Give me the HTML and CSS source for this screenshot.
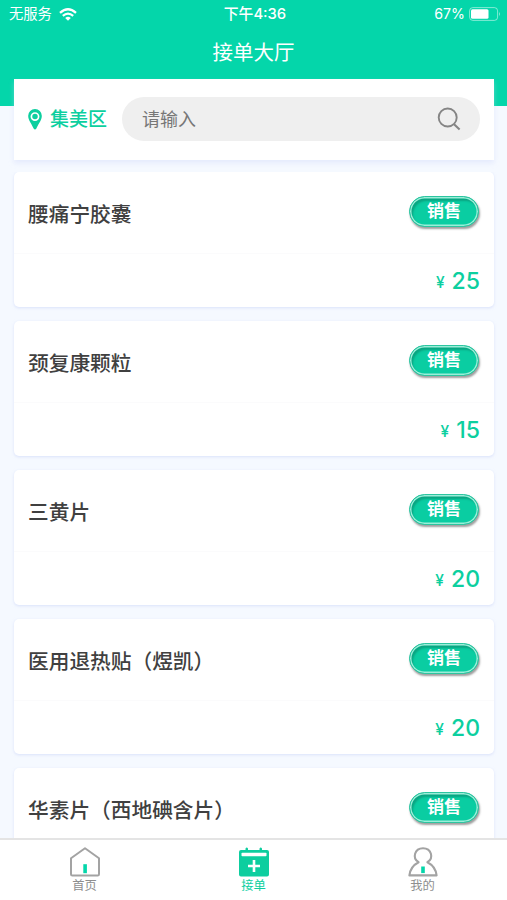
FILE: index.html
```html
<!DOCTYPE html>
<html lang="zh-CN">
<head>
  <meta charset="UTF-8">
  <meta name="viewport" content="width=device-width, initial-scale=1.0">
  <title>接单大厅</title>
  <link rel="stylesheet" href="styles.css">
</head>
<body>

<!-- Header -->
<header class="header">
  <div class="status-bar">
    <div class="status-left">
      <span>无服务</span>
      <svg class="wifi" viewBox="0 0 18 13" width="18" height="13">
        <path d="M1 4.8 Q9 -2.2 17 4.8" fill="none" stroke="#fff" stroke-width="2.3"/>
        <path d="M3.8 7.8 Q9 3.3 14.2 7.8" fill="none" stroke="#fff" stroke-width="2.2"/>
        <path d="M6.2 9.9 Q9 7.4 11.8 9.9 L9 12.8 Z" fill="#fff"/>
      </svg>
    </div>
    <span class="time">下午4:36</span>
    <div class="status-right">
      <span>67%</span>
      <svg viewBox="0 0 32 14" width="32" height="14">
        <rect x="0.6" y="0.6" width="28" height="12.8" rx="3.2" fill="none" stroke="#fff" stroke-opacity="0.5"/>
        <rect x="2" y="2.2" width="17.5" height="9.6" rx="1.5" fill="#fff"/>
        <path d="M30 4.8 Q31.8 7 30 9.2 Z" fill="#fff" fill-opacity="0.6"/>
      </svg>
    </div>
  </div>
  <h1>接单大厅</h1>
</header>

<!-- Search -->
<div class="search-card">
  <div class="location">
    <svg viewBox="0 0 14 21" width="14" height="21">
      <path d="M7 0 A6.8 6.8 0 0 0 0.2 6.9 C0.2 11.5 4.3 15.5 5.6 19.6 Q7 21.6 8.4 19.6 C9.7 15.5 13.8 11.5 13.8 6.9 A6.8 6.8 0 0 0 7 0 Z" fill="#0ccf9f"/>
      <circle cx="7" cy="7.6" r="3.6" fill="none" stroke="#fff" stroke-width="1.7"/>
    </svg>
    <span>集美区</span>
  </div>
  <div class="search-box">
    <input type="text" placeholder="请输入">
    <svg viewBox="0 0 24 24" width="24" height="24">
      <circle cx="10.7" cy="10.5" r="9" fill="none" stroke="#858585" stroke-width="1.9"/>
      <path d="M16.8 17 L22.6 22.4" stroke="#858585" stroke-width="2.1"/>
    </svg>
  </div>
</div>

<!-- Order list -->
<main class="order-list">
  <div class="order">
    <div class="order-top">
      <h2>腰痛宁胶囊</h2>
      <button class="sell">销售</button>
    </div>
    <div class="price"><small>¥</small>25</div>
  </div>
  <div class="order">
    <div class="order-top">
      <h2>颈复康颗粒</h2>
      <button class="sell">销售</button>
    </div>
    <div class="price"><small>¥</small>15</div>
  </div>
  <div class="order">
    <div class="order-top">
      <h2>三黄片</h2>
      <button class="sell">销售</button>
    </div>
    <div class="price"><small>¥</small>20</div>
  </div>
  <div class="order">
    <div class="order-top">
      <h2>医用退热贴（煜凯）</h2>
      <button class="sell">销售</button>
    </div>
    <div class="price"><small>¥</small>20</div>
  </div>
  <div class="order">
    <div class="order-top">
      <h2>华素片（西地碘含片）</h2>
      <button class="sell">销售</button>
    </div>
  </div>
</main>

<!-- Tab bar -->
<nav class="tab-bar">
  <a class="tab">
    <svg viewBox="0 0 32 32" width="32" height="32">
      <path d="M2 12.2 L16 2.2 L30 12.2 V28.2 Q30 29.6 28.6 29.6 H3.4 Q2 29.6 2 28.2 Z" fill="none" stroke="#a3a3a3" stroke-width="2" stroke-linejoin="round"/>
      <rect x="14.3" y="18.2" width="3.6" height="9" fill="#04d6aa"/>
    </svg>
    <span>首页</span>
  </a>
  <a class="tab active">
    <svg viewBox="0 0 32 32" width="32" height="32">
      <path d="M3 4 H7.5 V2.4 Q8.7 0.6 10 2.4 V4 H21.5 V2.4 Q22.7 0.6 24 2.4 V4 H29 Q31 4 31 6 V28.5 Q31 30.5 29 30.5 H3 Q1 30.5 1 28.5 V6 Q1 4 3 4 Z" fill="#0dce9f"/>
      <rect x="3.5" y="6.7" width="25" height="3.6" rx="0.8" fill="#fff"/>
      <path d="M16 14 V26 M10 20 H22" stroke="#fff" stroke-width="2.6"/>
    </svg>
    <span>接单</span>
  </a>
  <a class="tab">
    <svg viewBox="0 0 32 32" width="32" height="32">
      <path d="M11.6 16.2 C4.9 12.5 7.5 2.2 16 2.2 C24.5 2.2 27.1 12.5 20.4 16.2 C25.8 19 29 23.5 29.6 29.4 H2.4 C3 23.5 6.2 19 11.6 16.2 Z" fill="none" stroke="#a3a3a3" stroke-width="2.1" stroke-linejoin="round"/>
      <rect x="14.2" y="20.5" width="3.6" height="6.6" fill="#04d6aa"/>
    </svg>
    <span>我的</span>
  </a>
</nav>

</body>
</html>
```

FILE: styles.css
```css
* {
  box-sizing: border-box;
}

body {
  display: flex;
  flex-direction: column;
  height: 100vh;
  margin: 0;
  overflow: hidden;
  font-family: Inter, "Noto Sans CJK SC", sans-serif;
  background-color: #f5f9ff;
}

.header {
  flex: none;
  height: 106px;
  color: #fff;
  background-color: #04d6aa;
}

.status-bar {
  display: grid;
  grid-template-columns: 1fr auto 1fr;
  align-items: center;
  height: 28px;
  padding: 0 6px 0 9px;
  font-size: 14.8px;
  line-height: 28px;
}

.status-left,
.status-right {
  display: flex;
  align-items: center;
  gap: 7px;
}

.status-left {
  font-size: 14.3px;
}

.status-right {
  justify-content: flex-end;
  gap: 4px;
  font-size: 14.2px;
}

.status-bar .time {
  font-weight: 500;
}

.header h1 {
  margin: 5px 0 0;
  font-size: 20.5px;
  font-weight: 400;
  line-height: 40px;
  text-align: center;
}

/* Search */
.search-card {
  display: flex;
  flex: none;
  align-items: center;
  justify-content: space-between;
  height: 81px;
  margin: -27px 13px 0 14px;
  padding: 0 14px;
  background-color: #fff;
  box-shadow: 0 3px 5px rgba(205, 212, 250, 0.4);
}

.location {
  display: flex;
  align-items: center;
  gap: 8px;
  color: #0ccf9f;
  font-size: 19px;
  font-weight: 500;
  line-height: 28px;
}

.search-box {
  display: flex;
  align-items: center;
  width: 358px;
  height: 44px;
  margin-top: -1px;
  padding: 0 19px 0 20px;
  border-radius: 22px;
  background-color: #efefef;
}

.search-box input {
  flex: 1;
  min-width: 0;
  padding: 0;
  border: none;
  outline: none;
  font-family: inherit;
  font-size: 18px;
  background: none;
}

.search-box input::placeholder {
  color: #777;
}

/* Orders */
.order-list {
  flex: 1;
  min-height: 0;
  margin-top: 12px;
  padding: 0 13px 0 14px;
  overflow: hidden;
}

.order {
  height: 135px;
  margin-bottom: 14px;
  border-radius: 5px;
  background-color: #fff;
  box-shadow: 0 1px 3px rgba(195, 205, 245, 0.55);
}

.order-top {
  display: flex;
  align-items: center;
  justify-content: space-between;
  height: 82px;
  padding: 0 15px 0 14px;
  border-bottom: 1px solid #fbfbfc;
}

.order-top h2 {
  margin: 5px 0 0;
  color: #404040;
  font-size: 20.7px;
  font-weight: 500;
  line-height: 30px;
}

.sell {
  width: 70px;
  height: 31px;
  margin-top: -2px;
  padding: 0 0 1px;
  border: 1px solid #2cc5a0;
  border-radius: 16px;
  color: #fff;
  font-family: inherit;
  font-size: 17px;
  font-weight: 700;
  line-height: 26px;
  background-color: #0acda2;
  box-shadow: inset 0 0 0 1.5px #9aeed8, inset 2px 3px 2px 1px #0aa582, 1px 2px 2px rgba(80, 80, 80, 0.55);
}

.price {
  padding: 0 14px;
  color: #0ccf9f;
  font-size: 23px;
  font-weight: 500;
  line-height: 54px;
  text-align: right;
}

.price small {
  margin-right: 7px;
  font-size: 15.5px;
  vertical-align: 1px;
}

/* Tab bar */
.tab-bar {
  display: flex;
  flex: none;
  height: 62px;
  border-top: 2px solid #e4e4e4;
  background-color: #fff;
}

.tab {
  display: flex;
  flex: 1;
  flex-direction: column;
  align-items: center;
  padding-top: 6px;
  color: #8e8e8e;
  font-size: 12.3px;
  line-height: 16px;
}

.tab.active {
  color: #0ccf9f;
}
```
